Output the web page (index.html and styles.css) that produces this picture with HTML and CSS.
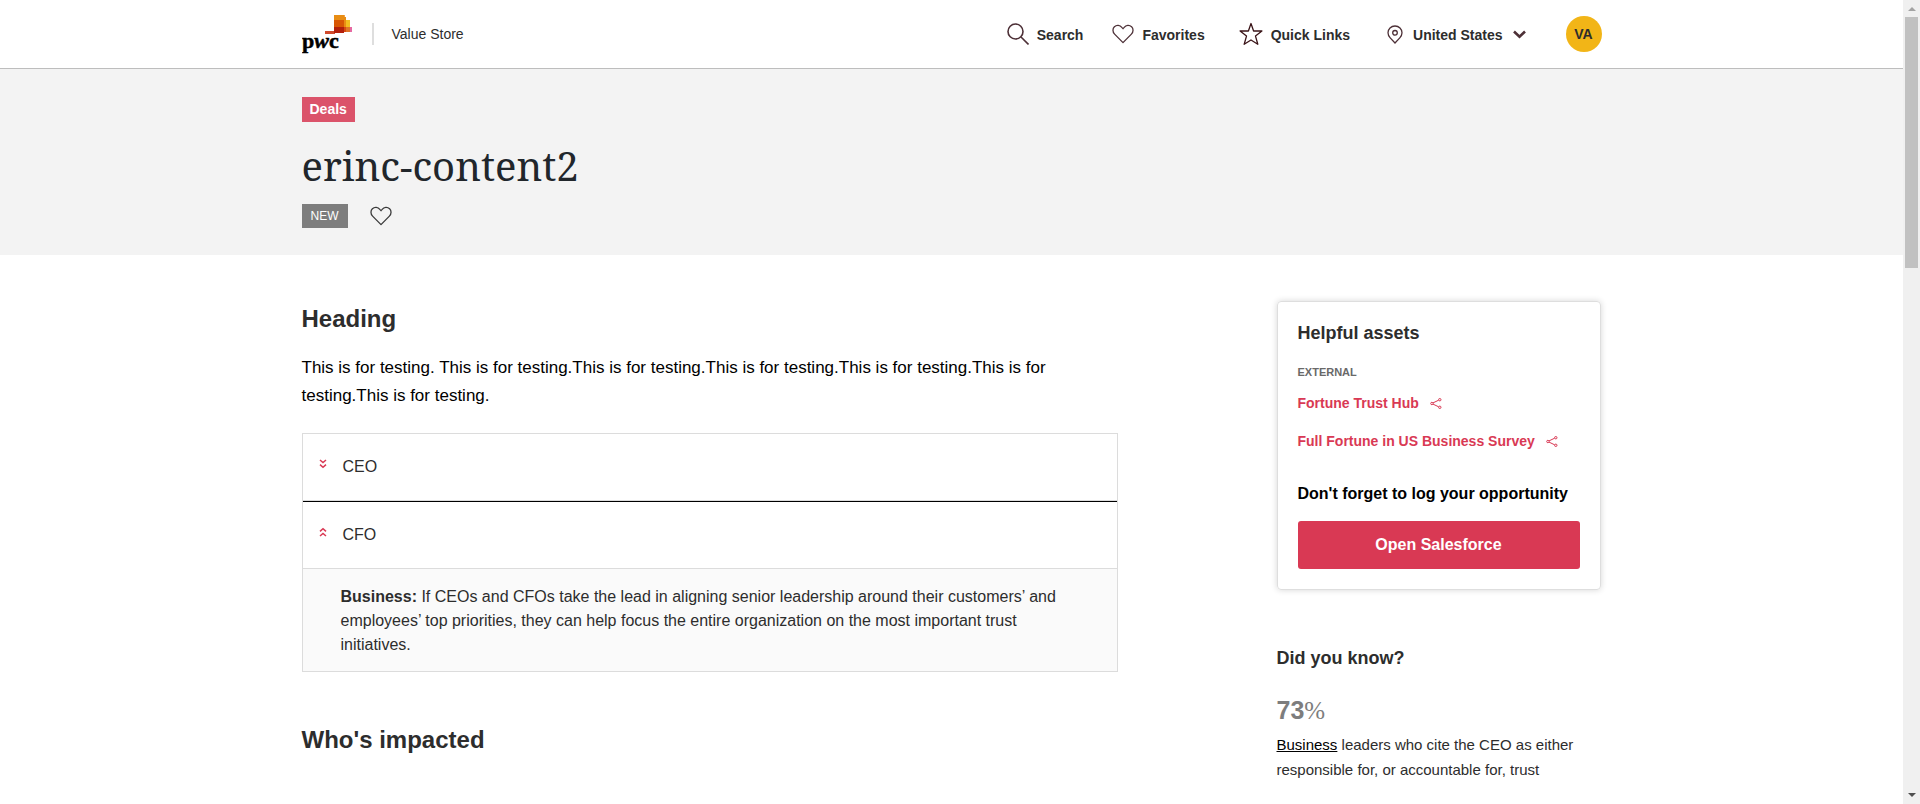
FILE: index.html
```html
<!DOCTYPE html>
<html lang="en">
<head>
<meta charset="utf-8">
<title>erinc-content2 - Value Store</title>
<meta name="viewport" content="width=device-width, initial-scale=1">
<link rel="stylesheet" href="styles.css">
</head>
<body>
<svg class="defs" aria-hidden="true">
  <symbol id="heart" viewBox="0 0 22 20"><path d="M11 18.6 2.6 10.1C.4 7.8.5 4.5 2.4 2.7 4.600.7 8 1 9.800 3.300L11 4.700l1.200-1.400C14 1 17.400.7 19.600 2.700c1.900 1.800 2 5.100-.2 7.400Z" fill="none" stroke="currentColor" stroke-width="1.300" stroke-linejoin="round"/></symbol>
  <symbol id="share" viewBox="0 0 12 11"><g fill="none" stroke="currentColor"><path d="M8.600 2.200 3 4.900M3 6.100l5.600 2.700"/><circle cx="1.900" cy="5.500" r="1.200"/><circle cx="9.800" cy="1.700" r="1.200"/><circle cx="9.800" cy="9.300" r="1.200"/></g></symbol>
  <symbol id="chevrons" viewBox="0 0 8 10"><path d="m1 1 3 2.600L7 1M1 5.600l3 2.600 3-2.600" fill="none" stroke="currentColor" stroke-width="1.500"/></symbol>
</svg>
<div class="window">
  <div class="page">
    <header class="topbar">
      <div class="container topbar-inner">
        <a class="brand" href="#" aria-label="PwC Value Store">
          <svg class="logo" viewBox="0 0 52 40" aria-hidden="true">
            <path fill="#d04a2c" d="M23 17h10v3H23z"/>
            <path fill="#e88d14" d="M32 1h10v5H32z"/>
            <path fill="#f0a04a" d="M42 1h1v5h-1z"/>
            <path fill="#d85604" d="M32 6h10v7H32z"/>
            <path fill="#e88c14" d="M42 3h2v10h-2z"/>
            <path fill="#f3bd1f" d="M44 6h4v7h-4z"/>
            <path fill="#b3200c" d="M32 13h10v6H32z"/>
            <path fill="#d74a10" d="M42 13h2v5h-2z"/>
            <path fill="#e0742a" d="M44 13h4v5h-4z"/>
            <path fill="#e669a2" d="M48 13h2v5h-2z"/>
            <text x="0" y="34" class="logo-text">p<tspan font-style="italic">w</tspan>c</text>
          </svg>
          <span class="brand-name">Value Store</span>
        </a>
        <nav class="nav">
          <a class="nav-item" href="#">
            <svg class="icon-search" viewBox="0 0 22 22" aria-hidden="true"><g fill="none" stroke="currentColor" stroke-width="1.600"><circle cx="8.500" cy="8.500" r="7.500"/><path d="m14 14 7.500 7.500"/></g></svg>
            <span>Search</span></a>
          <a class="nav-item favorites" href="#"><svg class="icon-heart" aria-hidden="true"><use href="#heart"/></svg><span>Favorites</span></a>
          <a class="nav-item" href="#">
            <svg class="icon-star" viewBox="0 0 24 24" aria-hidden="true"><path d="m12 1.500 2.600 7.500h8.300l-6.400 5.100 2.300 8.200L12 18 5.200 22.300l2.300-8.200L1.100 9h8.300Z" fill="none" stroke="currentColor" stroke-width="1.300" stroke-linejoin="round"/></svg>
            <span>Quick Links</span></a>
          <button class="nav-item region" type="button">
            <svg class="icon-pin" viewBox="0 0 16 19" aria-hidden="true"><g fill="none" stroke="currentColor" stroke-width="1.300"><path d="M8 18 3.200 12.900C1.700 11.300 1 9.700 1 7.800 1 4 4 1 8 1s7 3 7 6.800c0 1.900-.7 3.500-2.200 5.100Z"/><circle cx="8" cy="7.800" r="2.300"/></g></svg>
            <span>United States</span>
            <svg class="icon-caret" viewBox="0 0 13 9" aria-hidden="true"><path d="m1 1.500 5.500 5.200L12 1.500" fill="none" stroke="currentColor" stroke-width="2.600"/></svg>
          </button>
          <button class="avatar" type="button">VA</button>
        </nav>
      </div>
    </header>

    <section class="hero">
      <div class="container">
        <span class="tag">Deals</span>
        <h1 class="title">erinc-content2</h1>
        <div class="hero-meta">
          <span class="badge">NEW</span>
          <button class="like" type="button" aria-label="Add to favorites"><svg class="icon-heart" aria-hidden="true"><use href="#heart"/></svg></button>
        </div>
      </div>
    </section>

    <div class="container content">
      <main class="main">
        <h2 class="heading">Heading</h2>
        <p class="intro">This is for testing. This is for testing.This is for testing.This is for testing.This is for testing.This is for testing.This is for testing.</p>
        <div class="accordion">
          <button class="accordion-row" type="button" aria-expanded="false"><svg class="icon-chevrons" aria-hidden="true"><use href="#chevrons"/></svg>CEO</button>
          <button class="accordion-row open" type="button" aria-expanded="true"><svg class="icon-chevrons" aria-hidden="true"><use href="#chevrons"/></svg>CFO</button>
          <p class="accordion-panel"><strong>Business:</strong> If CEOs and CFOs take the lead in aligning senior leadership around their customers’ and employees’ top priorities, they can help focus the entire organization on the most important trust initiatives.</p>
        </div>
        <h2 class="heading impacted">Who's impacted</h2>
      </main>

      <aside class="side">
        <section class="card">
          <h3 class="side-title">Helpful assets</h3>
          <h4 class="group">EXTERNAL</h4>
          <ul class="assets">
            <li><a href="#">Fortune Trust Hub</a><svg class="icon-share" aria-hidden="true"><use href="#share"/></svg></li>
            <li><a href="#">Full Fortune in US Business Survey</a><svg class="icon-share" aria-hidden="true"><use href="#share"/></svg></li>
          </ul>
          <p class="reminder">Don't forget to log your opportunity</p>
          <button class="cta" type="button">Open Salesforce</button>
        </section>
        <section class="facts">
          <h3 class="side-title">Did you know?</h3>
          <p class="figure"><strong>73</strong><span class="percent">%</span></p>
          <p class="fact"><a href="#">Business</a> leaders who cite the CEO as either responsible for, or accountable for, trust</p>
        </section>
      </aside>
    </div>
  </div>
  <div class="scrollbar" aria-hidden="true">
    <span class="arrow up"></span>
    <span class="thumb"></span>
    <span class="arrow down"></span>
  </div>
</div>
</body>
</html>
```

FILE: styles.css
```css
* { box-sizing: border-box; }

body {
  margin: 0;
  font-family: "Liberation Sans", Arial, sans-serif;
  color: #2d2d2d;
  background: #fff;
}

h1, h2, h3, h4, p, ul { margin: 0; padding: 0; }
ul { list-style: none; }
a { color: inherit; text-decoration: none; }
button { font: inherit; color: inherit; border: 0; background: none; padding: 0; cursor: pointer; }
svg { display: block; flex: none; }
.defs { position: absolute; width: 0; height: 0; }

.window { display: flex; height: 100vh; }
.page { flex: 1; min-width: 0; overflow: hidden; }
.container { width: 100%; max-width: 1300px; margin: 0 auto; }

/* Top bar */
.topbar { border-bottom: 1px solid #bdbdbd; }
.topbar-inner { display: flex; align-items: center; justify-content: space-between; height: 68px; }
.brand { display: flex; align-items: center; }
.logo { width: 52px; height: 40px; }
.logo-text { font: bold 22px "Liberation Serif", serif; fill: #000; stroke: #000; stroke-width: 0.5; }
.brand-name {
  margin-left: 18px;
  padding-left: 18px;
  border-left: 2px solid #dedede;
  font-size: 14px;
  line-height: 22px;
}
.nav { display: flex; align-items: center; font-size: 14px; font-weight: bold; }
.nav-item { display: flex; align-items: center; gap: 8px; margin-right: 29px; }
.nav-item span { padding-top: 2px; }
.nav-item svg { color: #4d3037; }
.nav-item .icon-star { color: #3a1418; }
.favorites { margin-right: 34px; }
.icon-search { width: 22px; height: 22px; }
.icon-heart { width: 22px; height: 20px; }
.icon-star { width: 24px; height: 24px; }
.icon-pin { width: 16px; height: 19px; }
.icon-caret { width: 13px; height: 9px; }
.region { gap: 10px; margin: 0 40px 0 8px; }
.avatar { width: 36px; height: 36px; border-radius: 50%; background: #f2b517; font-weight: bold; }

/* Page header */
.hero { background: #f3f3f3; padding: 28px 0 27px; }
.tag {
  display: inline-block;
  padding: 0 8px;
  background: #db536a;
  color: #fff;
  font-size: 14px;
  font-weight: bold;
  line-height: 25px;
}
.title {
  margin-top: 16px;
  font: 400 40px/56px "Noto Serif", "Liberation Serif", serif;
  color: #21262b;
}
.hero-meta { display: flex; align-items: center; gap: 22px; margin-top: 10px; }
.badge { padding: 0 9px; background: #7d7d7d; color: #fff; font-size: 12px; line-height: 24px; }
.like { color: #3a3a3a; }

/* Body */
.content { display: flex; justify-content: space-between; align-items: flex-start; padding-top: 46px; }
.main { width: 62.8%; }
.heading { font-size: 24px; line-height: 36px; }
.intro { margin-top: 17px; padding-right: 32px; font-size: 17px; line-height: 28px; color: #000; }

.accordion { margin-top: 23px; border: 1px solid #dcdcdc; }
.accordion-row {
  display: flex;
  align-items: center;
  gap: 16px;
  width: 100%;
  height: 67px;
  padding-left: 16px;
  font-size: 16px;
  border-bottom: 1px solid #dcdcdc;
}
.accordion-row.open { height: 68px; border-top: 1px solid #000; }
.icon-chevrons { width: 8px; height: 10px; margin-bottom: 6px; color: #d93954; }
.open .icon-chevrons { transform: rotate(180deg); }
.accordion-panel { padding: 16px 48px 14px 38px; background: #fafafa; font-size: 16px; line-height: 24px; }
.impacted { margin-top: 50px; }

/* Sidebar */
.side { width: 25%; }
.card {
  margin-right: 1px;
  padding: 19px 20px 20px;
  border: 1px solid #dedede;
  border-radius: 4px;
  box-shadow: 0 0 6px rgba(0, 0, 0, 0.16);
}
.side-title { font-size: 18px; line-height: 24px; }
.group { margin-top: 19px; font-size: 11px; line-height: 16px; color: #696969; }
.assets { display: grid; gap: 18px; margin-top: 13px; font-size: 14px; font-weight: bold; line-height: 20px; color: #d93954; }
.assets li { display: flex; align-items: center; gap: 11px; }
.icon-share { width: 12px; height: 11px; }
.reminder { margin-top: 31px; font-size: 16px; font-weight: bold; line-height: 24px; color: #000; }
.cta {
  width: 100%;
  margin-top: 15px;
  border-radius: 3px;
  background: #d93954;
  color: #fff;
  font-size: 16px;
  font-weight: bold;
  line-height: 48px;
}
.facts { margin-top: 56px; }
.figure { margin-top: 24px; font-size: 25px; line-height: 32px; color: #7d7d7d; }
.percent { font-family: "Liberation Serif", serif; }
.fact { margin-top: 5px; font-size: 15px; line-height: 25px; }
.fact a { color: #000; text-decoration: underline; }

/* Scrollbar */
.scrollbar {
  display: flex;
  flex-direction: column;
  align-items: center;
  width: 17px;
  padding: 7px 0;
  background: #f0f0f0;
}
.arrow { border: 4px solid transparent; }
.up { border-top: 0; border-bottom-color: #a3a3a3; }
.down { margin-top: auto; border-bottom: 0; border-top-color: #505050; }
.thumb { width: 13px; height: 251px; margin-top: 6px; background: #c1c1c1; }
```
